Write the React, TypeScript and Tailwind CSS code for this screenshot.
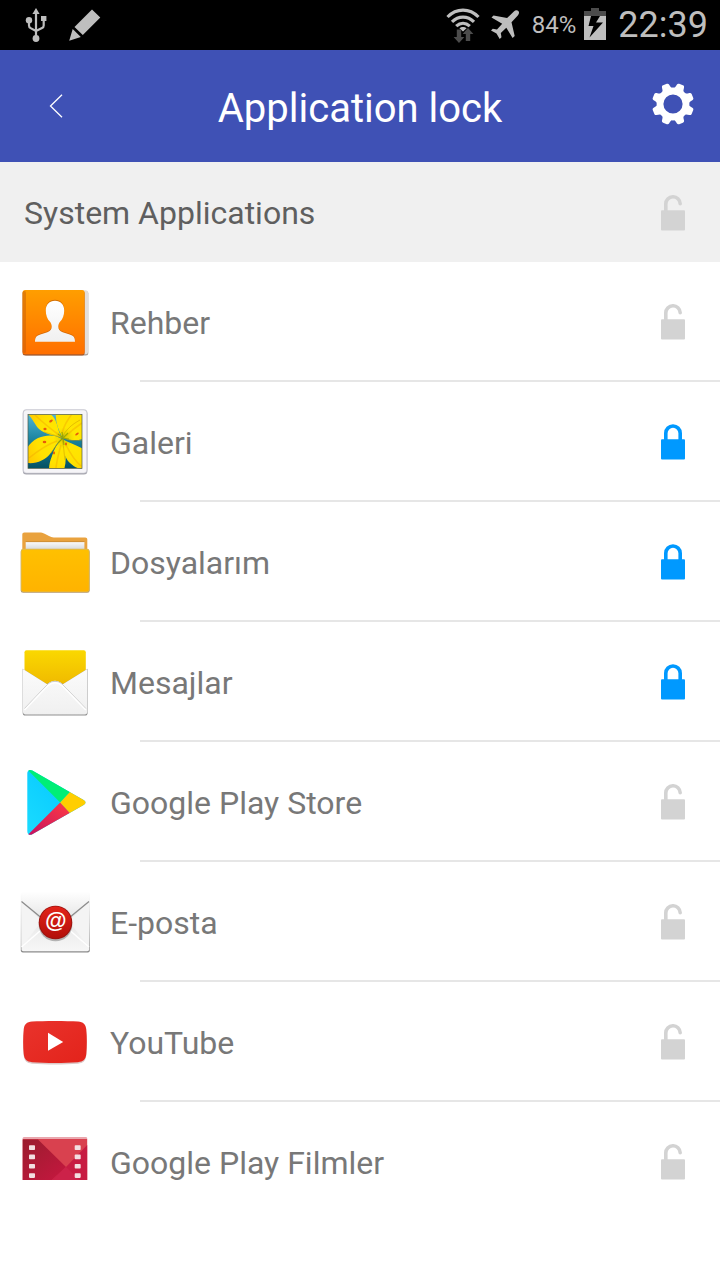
import { useState } from "react";
import type { ReactNode } from "react";

type AppItem = {
  name: string;
  icon: ReactNode;
  locked: boolean;
};

const ContactsIcon = () => (
  <svg viewBox="0 0 70 70" className="size-[70px]" aria-hidden="true">
    <defs>
      <linearGradient id="contacts-cover" x1="0" y1="0" x2="0" y2="1">
        <stop offset="0" stopColor="#ff9e00" />
        <stop offset="1" stopColor="#ff6f00" />
      </linearGradient>
      <linearGradient id="contacts-person" x1="0" y1="0" x2="0" y2="1">
        <stop offset="0" stopColor="#ffffff" />
        <stop offset="1" stopColor="#f0f0f0" />
      </linearGradient>
    </defs>
    <rect x="4" y="4" width="64.3" height="64.5" rx="2.5" fill="#a9a09a" />
    <rect x="4" y="3.2" width="64" height="64" rx="2.5" fill="#e3dfdc" />
    <rect x="2.6" y="4" width="62" height="64.5" rx="2.5" fill="#a85a2a" />
    <rect x="2.6" y="3" width="62" height="64.3" rx="2.5" fill="url(#contacts-cover)" />
    <rect x="2.6" y="4" width="3.4" height="62" rx="1.5" fill="#c25c0c" opacity="0.45" />
    <path
      d="M35 12.8c-5.6 0-9.2 4-9.2 9.8 0 5 1.6 8.6 4.2 11.4 1 1.2 1.7 3 1.7 5 0 2.6-1.4 4.4-4.4 5.4l-7 2.4C16.7 48 15 49.5 15 54h40c0-4.5-1.7-6-5.3-7.2l-7-2.4c-3-1-4.4-2.8-4.4-5.4 0-2 .7-3.8 1.7-5 2.6-2.8 4.2-6.4 4.2-11.4 0-5.8-3.6-9.8-9.2-9.8z"
      fill="#b45300"
      opacity="0.6"
    />
    <path
      d="M35 13.8c-5.6 0-9.2 4-9.2 9.6 0 5 1.6 8.6 4.2 11.4 1 1.2 1.7 3 1.7 5 0 2.6-1.4 4.4-4.4 5.4l-7 2.4C16.7 48.8 15 50.3 15 54.8h40c0-4.5-1.7-6-5.3-7.2l-7-2.4c-3-1-4.4-2.8-4.4-5.4 0-2 .7-3.8 1.7-5 2.6-2.8 4.2-6.4 4.2-11.4 0-5.6-3.6-9.6-9.2-9.6z"
      fill="url(#contacts-person)"
    />
  </svg>
);

const GalleryIcon = () => (
  <svg viewBox="0 0 70 70" className="size-[70px]" aria-hidden="true">
    <defs>
      <linearGradient id="gallery-sky" x1="0" y1="0" x2="0" y2="1">
        <stop offset="0" stopColor="#4fb4d4" />
        <stop offset="0.5" stopColor="#17809c" />
        <stop offset="1" stopColor="#045062" />
      </linearGradient>
      <radialGradient id="gallery-petal" gradientUnits="userSpaceOnUse" cx="44" cy="31" r="42">
        <stop offset="0" stopColor="#dccb00" />
        <stop offset="0.25" stopColor="#ffe600" />
        <stop offset="0.65" stopColor="#ffe100" />
        <stop offset="1" stopColor="#ffc800" />
      </radialGradient>
      <clipPath id="gallery-clip">
        <rect x="8" y="7.5" width="54" height="54" />
      </clipPath>
    </defs>
    <rect x="2.8" y="3.3" width="64.6" height="64.3" rx="3.5" fill="#a7a7b0" />
    <rect x="2.8" y="2.3" width="64.6" height="64" rx="3.5" fill="#c9c9d2" />
    <rect x="3.8" y="3.2" width="62.6" height="62.6" rx="3" fill="#f6f5f8" />
    <g clipPath="url(#gallery-clip)">
      <rect x="8" y="7.5" width="54" height="54" fill="url(#gallery-sky)" />
      <g fill="url(#gallery-petal)">
        <path d="M42 31C35 28 26 28 19 22 15 18 13 12 8 7h20c5 0 8 6 10 14 1 4 2 6 4 10z" />
        <path d="M42 30C38 22 35 14 36 5h28v8c-6 3-14 9-22 17z" />
        <path d="M42 31c5-9 11-15 21-19v20c-7 2-14 1-21-1z" />
        <path d="M42 32C34 27 26 28 18 31 12 34 9 38 7 41v15c10 1 18-3 23-9 5-6 6-11 12-15z" />
        <path d="M42 32c-5 5-8 10-10 17-2 5-3 9-3 14h15c3-10 2-20-2-31z" />
        <path d="M42 32c0 9 2 16 6 22 4 4 8 8 15 8V42c-6-4-14-6-21-10z" />
      </g>
      <g fill="none" stroke="#f2a800" strokeWidth="1.6" opacity="0.45">
        <path d="M39 28C31 22 23 16 15 8M42 26C44 19 48 12 52 7M46 29c5-5 10-9 16-13M37 34c-9 3-18 9-28 17M41 38c-2 7-4 14-5 23M46 38c4 8 8 15 15 21" />
      </g>
      <path d="M42 31C35 28 30 27 24 25M42 32c-5 4-8 10-11 14M42 32c2 8 2 15 3 21M43 31c7 3 13 3 20 2M42 30c5-8 9-12 18-17" fill="none" stroke="#c99700" strokeWidth="0.7" opacity="0.7" />
      <path d="M43 31l-5-4M43 31l-1-6M43 31l5-5M43 31l6 1M43 31l-5 5M43 31l1 7" fill="none" stroke="#8fa000" strokeWidth="1.2" opacity="0.8" />
      <g fill="#e8590c">
        <ellipse cx="25" cy="22" rx="1.6" ry="1.2" />
        <ellipse cx="31" cy="14" rx="2" ry="1.2" transform="rotate(-35 31 14)" />
        <ellipse cx="24.5" cy="35" rx="1.8" ry="1.2" />
        <ellipse cx="34" cy="46" rx="1" ry="1.4" />
        <ellipse cx="46" cy="37" rx="1" ry="1.4" />
        <ellipse cx="57" cy="27" rx="2" ry="1" transform="rotate(-35 57 27)" />
      </g>
    </g>
    <rect x="8" y="7.5" width="54" height="54" fill="none" stroke="#4f5b49" strokeWidth="0.7" />
  </svg>
);

const FolderIcon = () => (
  <svg viewBox="0 0 70 70" className="size-[70px]" aria-hidden="true">
    <defs>
      <linearGradient id="folder-front" x1="0" y1="0" x2="0" y2="1">
        <stop offset="0" stopColor="#ffc000" />
        <stop offset="1" stopColor="#ffb300" />
      </linearGradient>
      <linearGradient id="folder-paper" x1="0" y1="0" x2="0" y2="1">
        <stop offset="0" stopColor="#fafafa" />
        <stop offset="1" stopColor="#cfd2d6" />
      </linearGradient>
    </defs>
    <path
      d="M2.3 28V7.5c0-1.3.8-2.1 2.1-2.1h15c2 0 3.6.4 5.200 1.300l4.400 2.400c1.600.9 2.800 1.300 4.800 1.300h31.400c1.300 0 2.100.7 2.100 2V28z"
      fill="#e9a23e"
    />
    <rect x="5.7" y="15" width="58.7" height="9" fill="url(#folder-paper)" />
    <rect x="5.7" y="14.3" width="58.7" height="0.8" fill="#c88a36" />
    <rect x="0.7" y="22.5" width="69" height="43.3" rx="2.4" fill="#b59764" />
    <rect x="0.9" y="21.8" width="68.6" height="43.2" rx="2.4" fill="#dfb94e" />
    <rect x="1.6" y="22.8" width="67.2" height="41.6" rx="1.8" fill="url(#folder-front)" />
  </svg>
);

const MessagesIcon = () => (
  <svg viewBox="0 0 70 70" className="size-[70px]" aria-hidden="true">
    <defs>
      <linearGradient id="messages-letter" x1="0" y1="0" x2="0" y2="1">
        <stop offset="0" stopColor="#fad800" />
        <stop offset="1" stopColor="#eeb500" />
      </linearGradient>
      <linearGradient id="messages-paper" x1="0" y1="0" x2="0" y2="1">
        <stop offset="0" stopColor="#fbfbfb" />
        <stop offset="1" stopColor="#f0f0f0" />
      </linearGradient>
    </defs>
    <rect x="4.5" y="3.2" width="61.3" height="40" rx="2" fill="url(#messages-letter)" />
    <path
      d="M2.7 21.8l24 15.2c5-3.4 11.6-3.400 16.600 0l24.300-15.200V66c0 1.600-1 2.600-2.600 2.600H5.300c-1.600 0-2.600-1-2.600-2.600z"
      fill="#8f8f8f"
    />
    <path
      d="M3 22l24.200 15.300c5-4.800 10.600-4.800 15.600 0L67.300 22v43c0 1.600-1 2.500-2.500 2.500H5.500C4 67.500 3 66.600 3 65z"
      fill="url(#messages-paper)"
    />
    <path d="M4.500 61.500L27.500 37.500c4.600-4.200 10.400-4.200 15 0l23.300 24" fill="none" stroke="#c9c9c9" strokeWidth="1" />
    <path d="M4.500 63L27.500 39c4.600-4.200 10.400-4.200 15 0l23.300 24" fill="none" stroke="#ffffff" strokeWidth="1.6" />
  </svg>
);

const PlayStoreIcon = () => (
  <svg viewBox="0 0 70 70" className="size-[70px]" aria-hidden="true">
    <defs>
      <linearGradient id="play-blue" x1="1" y1="0" x2="0" y2="1">
        <stop offset="0" stopColor="#00c3ff" />
        <stop offset="1" stopColor="#1bdcff" />
      </linearGradient>
      <linearGradient id="play-red" x1="1" y1="0" x2="0" y2="1">
        <stop offset="0" stopColor="#ff3a44" />
        <stop offset="1" stopColor="#c31162" />
      </linearGradient>
      <clipPath id="play-clip">
        <path d="M7.300 6.500c0-3.400 2.500-4.300 5-2.900L63.200 32.800c3 1.700 3 3.700 0 5.400L12.300 67.200c-2.500 1.400-5 .4-5-3z" />
      </clipPath>
    </defs>
    <g clipPath="url(#play-clip)">
      <rect x="7" y="2" width="60" height="66" fill="url(#play-blue)" />
      <path d="M7 2.300L40.200 35.500 50.500 24.500V0H7z" fill="#00ee76" />
      <path d="M7 68.700L40.200 35.500 50.500 46.500V70H7z" fill="url(#play-red)" />
      <path d="M40.200 35.500L52 22.700h18v25.600H52z" fill="#ffce00" />
    </g>
  </svg>
);

const EmailIcon = () => (
  <svg viewBox="0 0 70 70" className="size-[70px]" aria-hidden="true">
    <defs>
      <linearGradient id="email-paper" x1="0" y1="0" x2="0" y2="1">
        <stop offset="0" stopColor="#ffffff" />
        <stop offset="0.45" stopColor="#e6e6e6" />
        <stop offset="1" stopColor="#f7f7f7" />
      </linearGradient>
      <linearGradient id="email-edge" x1="0" y1="0" x2="0" y2="1">
        <stop offset="0" stopColor="#ffffff" />
        <stop offset="0.5" stopColor="#cfcfcf" />
        <stop offset="1" stopColor="#8a8a8a" />
      </linearGradient>
      <linearGradient id="email-seal" x1="0" y1="0" x2="0" y2="1">
        <stop offset="0" stopColor="#e2231a" />
        <stop offset="1" stopColor="#b30f0a" />
      </linearGradient>
    </defs>
    <rect x="0.8" y="5" width="69" height="60.5" rx="2" fill="url(#email-edge)" />
    <rect x="1.5" y="4.5" width="67.6" height="59.7" rx="2" fill="url(#email-paper)" />
    <path d="M1.500 15L22 34 1.500 60z" fill="#f4f4f4" />
    <path d="M69 15L48.500 34 69 60z" fill="#f4f4f4" />
    <path d="M1.500 14.500L24 33M69 14.500L46.500 33" fill="none" stroke="#8d8d8d" strokeWidth="1.3" />
    <path d="M1.500 60L24 40.500M69 60L46.500 40.500" fill="none" stroke="#ffffff" strokeWidth="1.5" />
    <circle cx="35.5" cy="37.500" r="16.800" fill="#8b8b8b" opacity="0.6" />
    <circle cx="35.5" cy="35.500" r="16.800" fill="#9d1410" />
    <circle cx="35.5" cy="35.300" r="15.800" fill="url(#email-seal)" />
    <text x="35.5" y="41" textAnchor="middle" fontSize="22" fontStyle="italic" fontWeight="700" fontFamily="Liberation Sans, sans-serif" fill="#ffffff">
      @
    </text>
  </svg>
);

const YouTubeIcon = () => (
  <svg viewBox="0 0 70 70" className="size-[70px]" aria-hidden="true">
    <defs>
      <linearGradient id="youtube-body" x1="0" y1="0" x2="1" y2="1">
        <stop offset="0" stopColor="#e9332c" />
        <stop offset="1" stopColor="#e3231b" />
      </linearGradient>
    </defs>
    <path
      d="M35 15.8c9 0 17 .2 23 .6 5.300.4 7.700 2.700 8.300 8 .7 7.500.7 16 0 23.200-.6 5.300-3 7.700-8.300 8.100-14 .9-32 .9-46 0-5.300-.4-7.700-2.800-8.300-8.100-.7-7.200-.7-15.700 0-23.200.6-5.300 3-7.600 8.300-8 6-.4 14-.6 23-.6z"
      fill="#dcc9c8"
      transform="translate(0 1)"
    />
    <path
      d="M35 14c9 0 17 .2 23 .6 5.300.4 7.700 2.700 8.300 8 .7 7.500.7 17 0 24.500-.6 5.300-3 7.700-8.300 8.100-14 .9-32 .9-46 0-5.300-.4-7.700-2.800-8.300-8.100-.7-7.500-.7-17 0-24.500.6-5.300 3-7.600 8.300-8 6-.4 14-.6 23-.6z"
      fill="url(#youtube-body)"
    />
    <path d="M28 25.800L43.200 35 28 43.800z" fill="#ffffff" />
  </svg>
);

const MoviesIcon = () => (
  <svg viewBox="0 0 70 70" className="size-[70px]" aria-hidden="true">
    <defs>
      <linearGradient id="movies-left" x1="0" y1="0" x2="0.7" y2="1">
        <stop offset="0" stopColor="#9a1d2e" />
        <stop offset="1" stopColor="#c5173f" />
      </linearGradient>
    </defs>
    <rect x="2.7" y="10.5" width="64.5" height="50" rx="1.5" fill="#d9414f" />
    <path d="M2.700 12.500H18L46 40 24 60.500H2.700z" fill="url(#movies-left)" />
    <path d="M46 40L67.200 18v42.500H24z" fill="#c71c42" />
    <path d="M46 40l21.200 20.500H24z" fill="#cc2249" />
    <rect x="2.7" y="10.3" width="64.5" height="1.8" rx="0.9" fill="#e9a9b0" />
    <g fill="#f3dfe1">
      {[18.3, 27.6, 36.9, 46.2].map((y) => (
        <g key={y}>
          <rect x="9" y={y} width="6" height="4.7" rx="0.8" />
          <rect x="54.7" y={y} width="6" height="4.7" rx="0.8" />
        </g>
      ))}
    </g>
  </svg>
);

const LockIcon = ({ locked }: { locked: boolean }) => (
  <svg viewBox="0 0 24 36" className="h-9 w-6" aria-hidden="true">
    <rect x="0" y="15.3" width="24" height="20.2" rx="1" fill="currentColor" />
    <path
      d={locked ? "M4.800 17V9.200a7.200 7.200 0 0 1 14.400 0V17" : "M4.800 17V9.200a7.200 7.200 0 0 1 14.400-.4"}
      fill="none"
      stroke="currentColor"
      strokeWidth="3.6"
      strokeLinecap="round"
    />
  </svg>
);

const GearIcon = () => (
  <svg viewBox="-21 -21 42 42" className="size-[42px]" fill="currentColor" aria-hidden="true">
    <circle r="13" fill="none" stroke="currentColor" strokeWidth="6.800" />
    {[22.5, 67.5, 112.5, 157.5, 202.5, 247.5, 292.5, 337.5].map((angle) => (
      <path
        key={angle}
        d="M-5.800-14.500C-4.400-15.600-4.200-17.400-3.900-19.300-3.700-20.500-3.100-21-2-21H2C3.100-21 3.700-20.500 3.900-19.300 4.200-17.400 4.400-15.600 5.800-14.500z"
        transform={`rotate(${angle})`}
      />
    ))}
  </svg>
);

const UsbIcon = () => (
  <svg viewBox="0 0 22 34" className="h-[34px] w-[22px]" aria-hidden="true">
    <g fill="currentColor">
      <path d="M11 0l3.600 6H7.400z" />
      <circle cx="11" cy="30.500" r="3.400" />
      <circle cx="4" cy="12.300" r="3.200" />
      <rect x="16" y="8" width="5.400" height="5" />
    </g>
    <path
      d="M11 4v24M4 13v4.500c0 1.400.5 2 1.600 2.600L11 23l6-3c1.200-.6 1.700-1.300 1.700-2.600V12"
      fill="none"
      stroke="currentColor"
      strokeWidth="2.200"
    />
  </svg>
);

const PencilIcon = () => (
  <svg viewBox="0 0 32 32" className="size-8" fill="currentColor" aria-hidden="true">
    <path d="M23 .5L31.300 8.400 13.800 26 5.500 17.900zM3.700 20L11.800 28 .2 31.800z" />
  </svg>
);

const WifiIcon = () => (
  <svg viewBox="0 0 34 36" className="h-9 w-[34px]" aria-hidden="true">
    <g fill="none" stroke="currentColor" strokeWidth="3.200">
      <path d="M1.500 10c9-9.200 22-9.200 31 0" />
      <path d="M6 14.800c6.400-6.300 15.600-6.300 22 0" />
      <path d="M10.200 19.200c4.200-3.900 9.400-3.900 13.600 0" />
    </g>
    <path d="M17 24.500l-3.600-3.200c2-1.800 5.200-1.800 7.200 0z" fill="currentColor" />
    <g fill="#4c4c4c">
      <path d="M10.800 22.500h4.400v7.500h3.200L13 36 7.600 30h3.200z" />
      <path d="M19.800 34h4.400v-7h3.200L22 21l-5.400 6h3.200z" />
    </g>
  </svg>
);

const PlaneIcon = () => (
  <svg viewBox="0 0 30 30" className="size-[30px]" fill="currentColor" aria-hidden="true">
    <path d="M28.300 1c1.200 1.200.9 3-.5 4.500l-6.300 6.700 3.200 13.800-2.100 2-6.300-10.300-5.500 5.300.7 4.200-1.800 1.800-3.200-5.600L1 20.500l1.800-1.800 4.200.7 5.200-5.600L1.500 7.600l2-2.200 13.600 2.700 6.500-6.400C25.200.2 27.200-.1 28.300 1z" />
  </svg>
);

const BatteryIcon = () => (
  <svg viewBox="0 0 22 32" className="h-8 w-[22px]" aria-hidden="true">
    <path d="M7 0h8v3h7v5H0V3h7z" fill="#4c4c4c" />
    <rect y="8" width="22" height="24" fill="currentColor" />
    <path d="M7 8h9l-4 6.500h7L5.500 29.500l4-11.500H4.500z" fill="#000000" />
  </svg>
);

const systemApps: AppItem[] = [
  { name: "Rehber", icon: <ContactsIcon />, locked: false },
  { name: "Galeri", icon: <GalleryIcon />, locked: true },
  { name: "Dosyalarım", icon: <FolderIcon />, locked: true },
  { name: "Mesajlar", icon: <MessagesIcon />, locked: true },
  { name: "Google Play Store", icon: <PlayStoreIcon />, locked: false },
  { name: "E-posta", icon: <EmailIcon />, locked: false },
  { name: "YouTube", icon: <YouTubeIcon />, locked: false },
  { name: "Google Play Filmler", icon: <MoviesIcon />, locked: false },
];

const StatusBar = () => (
  <div className="flex h-[50px] shrink-0 items-center justify-between bg-black pl-[25px] pr-3 text-[#bebebe]">
    <div className="flex items-center gap-[22px]">
      <UsbIcon />
      <PencilIcon />
    </div>
    <div className="flex items-center">
      <WifiIcon />
      <span className="ml-2.5">
        <PlaneIcon />
      </span>
      <span className="ml-3 text-2xl">84%</span>
      <span className="ml-2 pb-0.5">
        <BatteryIcon />
      </span>
      <span className="ml-3 text-4xl">22:39</span>
    </div>
  </div>
);

const Header = () => (
  <header className="flex h-28 shrink-0 items-center justify-between bg-[#3f51b5] px-6 text-white">
    <button type="button" aria-label="Back" className="flex size-16 items-center justify-center">
      <svg viewBox="0 0 14 24" className="h-6 w-3.5" fill="none" stroke="currentColor" strokeWidth="1.3" aria-hidden="true">
        <path d="M13 .8L1.500 12 13 23.200" />
      </svg>
    </button>
    <h1 className="pt-1.5 text-[40px]">Application lock</h1>
    <button type="button" aria-label="Settings" className="flex size-16 items-center justify-end pb-1 pr-0.5">
      <GearIcon />
    </button>
  </header>
);

const App = () => {
  const [apps, setApps] = useState(systemApps);
  const allLocked = apps.every((app) => app.locked);

  const toggle = (name: string) =>
    setApps(apps.map((app) => (app.name === name ? { ...app, locked: !app.locked } : app)));

  return (
    <div className="flex h-screen flex-col bg-white font-[Roboto,sans-serif]">
      <StatusBar />
      <Header />

      <main className="flex min-h-0 flex-1 flex-col">
        <div className="flex h-[100px] shrink-0 items-center justify-between bg-[#f0f0f0] pl-6 pr-[35px] pt-0.5 text-[#5f5f5f]">
          <h2 className="text-[32px]">System Applications</h2>
          <button
            type="button"
            aria-label="Lock all"
            aria-pressed={allLocked}
            onClick={() => setApps(apps.map((app) => ({ ...app, locked: !allLocked })))}
            className={allLocked ? "text-[#0099ff]" : "text-[#d3d3d3]"}
          >
            <LockIcon locked={allLocked} />
          </button>
        </div>

        <ul className="min-h-0 flex-1 overflow-y-auto [scrollbar-width:none]">
          {apps.map((app) => (
            <li key={app.name}>
              <div className="flex h-[118px] items-center gap-5 pl-5 pr-[35px] pt-0.5">
                {app.icon}
                <span className="flex-1 pt-0.5 text-[32px] text-[#787878]">{app.name}</span>
                <button
                  type="button"
                  aria-label={app.name}
                  aria-pressed={app.locked}
                  onClick={() => toggle(app.name)}
                  className={app.locked ? "text-[#0099ff]" : "text-[#d3d3d3]"}
                >
                  <LockIcon locked={app.locked} />
                </button>
              </div>
              <div className="ml-[140px] h-0.5 bg-[#e6e6e6]" />
            </li>
          ))}
        </ul>
      </main>

      {/* Banner space */}
      <div className="h-[100px] shrink-0" />
    </div>
  );
};

export default App;
